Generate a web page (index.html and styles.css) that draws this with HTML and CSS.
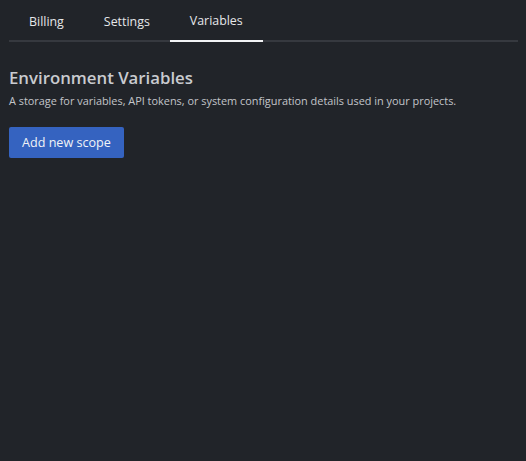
FILE: index.html
```html
<!doctype html>
<html lang="en">
<head>
	<meta charset="UTF-8">
	<title>Variables</title>
	<link rel="stylesheet" href="styles.css">
</head>
<body>
	<div id="page">
		<div class="tabs">
			<a class="tab">Billing</a>
			<a class="tab">Settings</a>
			<a class="tab active">Variables</a>
		</div>
		<div class="content">
			<h1 class="title">Environment Variables</h1>
			<p class="desc">A storage for variables, API tokens, or system configuration details used in your projects.</p>
			<button class="btn">Add new scope</button>
		</div>
	</div>
</body>
</html>
```

FILE: styles.css
```css
html, body{
	margin: 0;
	padding: 0;
	background: #212429;
	height: 100%;
}
body{
	font-family: "Open Sans", "Noto Sans", sans-serif;
	color: #d0d2d6;
}
#page{
	padding: 0 8px 0 9px;
}
.tabs{
	display: flex;
	height: 42px;
	border-bottom: 2px solid #36393f;
	box-sizing: border-box;
}
.tab{
	display: block;
	padding: 0 20px;
	line-height: 43px;
	font-size: 12.4px;
	color: #e6e7e9;
	cursor: pointer;
	box-sizing: border-box;
	margin-bottom: -2px;
}
.tab.active{
	border-bottom: 2px solid #f2f3f5;
	line-height: 41px;
}
.content{
	padding-top: 23px;
}
.title{
	margin: 0;
	font-size: 16.8px;
	font-weight: 600;
	line-height: 26px;
	color: #c9cbcf;
}
.desc{
	margin: 2px 0 0;
	font-size: 10.9px;
	line-height: 16px;
	color: #c3c5c9;
}
.btn{
	margin-top: 18px;
	height: 31px;
	padding: 0 13px;
	background: #3563c0;
	color: #f1f3f7;
	border: none;
	border-radius: 2px;
	font-family: inherit;
	font-size: 12.6px;
	cursor: pointer;
}
```
